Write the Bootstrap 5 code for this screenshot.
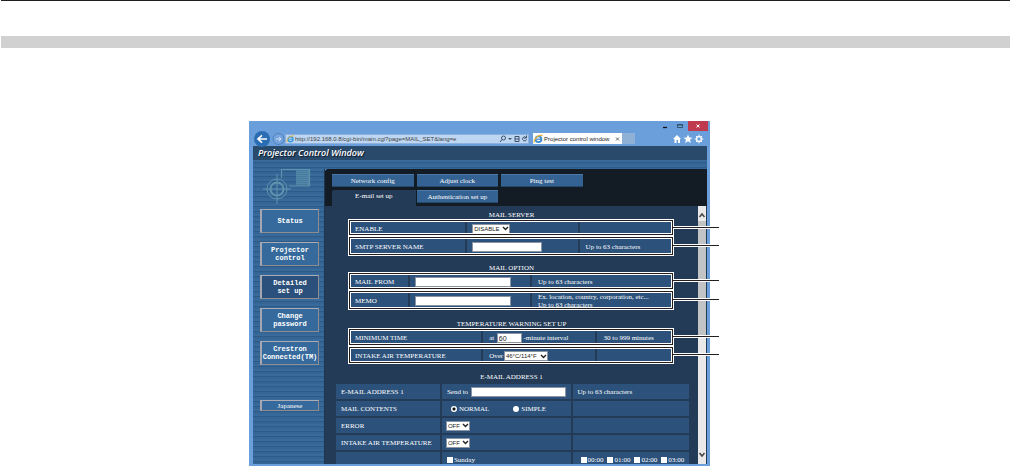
<!DOCTYPE html>
<html lang="en">
<head>
<meta charset="utf-8">
<meta name="viewport" content="width=device-width, initial-scale=1">
<title>Projector Control Window</title>
<link rel="stylesheet" href="https://cdn.jsdelivr.net/npm/bootstrap@5.3.0/dist/css/bootstrap.min.css">
<script src="https://cdn.jsdelivr.net/npm/bootstrap@5.3.0/dist/js/bootstrap.bundle.min.js"></script>
<style>
:root{--frame:#6b9fdb;--ink:#231f20;--panel:#233b57;--cell:#2c527c;--tab:#346292;--dark:#131b24}
body{background:#fff;font:7px/8px "Liberation Serif",serif;overflow-x:hidden}
.rule-top{height:1px;background:var(--ink);margin-left:1px}
.rule-band{height:12px;background:#d1d1d1;margin:35px 0 73px 1px}
.stage{display:grid;grid-template-columns:249fr 461fr 300fr}
.browser{grid-column:2;background:var(--frame);padding:0 3px 2px 4px}
input,select,button{font:inherit;border-radius:0}
/* window chrome */
.chrome{font:6px/8px "Liberation Sans",sans-serif;color:#222}
.titlebar{height:10px;margin-right:-1px}
.titlebar button{border:0;background:none;padding:0;height:10px;line-height:0}
.titlebar .shut{background:#bf3a4e;width:20px}
.toolbar-row{height:15px}
.toolbar-row button,.toolbar-row .ico{border:0;background:none;padding:0;line-height:0}
.addr{background:#bdd6f2;height:10px;border:1px solid #8fb1dc;flex:245 1 0;min-width:0}
.addr input{border:0;background:none;padding:0;color:#444;height:8px;min-width:0}
.page-tab{background:#fff;height:11px;flex:90 1 0;min-width:0;white-space:nowrap}
.new-tab{background:#8fb1d6;height:11px;width:13px}
.toolbar-row .tools{padding-left:38px}
/* page */
.banner{height:14px;background:#2a4a6b;color:#fff;font:italic 600 9px/14px "Open Sans",sans-serif;text-shadow:1px 1px 1px #0b1725;padding-left:5px}
.stripes{background:repeating-linear-gradient(#386a9b 0 2px,#2d5a86 2px 3px,#356594 3px 5px)}
.strip{height:9px}
.side{width:72px;padding:0 5px 0 7px;border-right:1px solid #20364f}
.side .btn{display:flex;align-items:center;justify-content:center;height:24px;border:1px solid #8d8d92;border-top-color:#a9abb5;border-left:2px solid #a5a8b3;border-radius:0;background:#366a9c;color:#fff;font:bold 7px/8px "Liberation Mono",monospace;padding:0;margin-bottom:9px;text-align:center;white-space:nowrap}
.side .btn.now{background:#2b507b}
.side .btn.lang{height:11px;margin-top:35px;font-family:"Liberation Serif",serif;font-weight:400}
.emblem{height:40px}
.main-col{min-width:0}
.top-tabs{background:var(--dark);padding:5px 0 0 7px;border-top-left-radius:3px;height:37px}
.tab-grid{display:grid;grid-template-columns:repeat(3,82fr) 122fr;column-gap:3px;row-gap:3px}
.tab-grid a{background:var(--tab);color:#fff;text-decoration:none;text-align:center;height:13px;border-top:1px solid #4a7aab;border-bottom:1px solid #24486e;line-height:12px;white-space:nowrap}
.tab-grid a.on{background:var(--panel);border:0;height:16px;line-height:13px;margin-right:-2px;border-radius:2px 0 0 0}
.form-row{background:var(--panel)}
.form-pane{color:#fff;height:258px;min-width:0}
.head{font-size:7px;line-height:8px;text-align:center;margin:0;font-weight:400}
.head.first{padding-top:5px}
.head.mid{padding-top:8px}
.head.far{padding:10px 0 0}
.head.last{padding:9px 0 3px}
.framed{position:relative;margin:0 24px 0 23px;border:1px solid #fff;background:var(--panel);display:grid;column-gap:2px}
.framed::before{content:"";position:absolute;inset:0;border:1px solid var(--ink);box-shadow:inset 0 0 0 1px #fff;pointer-events:none}
.framed::after{content:"";position:absolute;left:100%;top:50%;margin-top:-2px;width:46px;height:3px;background:var(--ink);border:solid #fff;border-width:1px 0}
.framed>div{background:var(--cell);display:flex;align-items:center;padding:2px 5px 0 6px;white-space:nowrap;min-width:0}
.framed label,.sched label{flex:none}
.h17{height:17px}.h18{height:18px}.h20{height:20px}
.g-server{grid-template-columns:117fr 111fr 94fr}
.g-option{grid-template-columns:59fr 121fr 142fr}
.g-temp{grid-template-columns:133fr 113fr 76fr}
.field{border:1px solid #8b94a3;background:#fff;height:10px;padding:0 1px;color:#222;font-family:"Liberation Sans",sans-serif;font-size:7px;line-height:8px;min-width:0;margin-left:-1px}
select.field{appearance:none;padding:0 8px 0 1px;font-size:6px;background:#fff url("data:image/svg+xml,%3Csvg xmlns='http://www.w3.org/2000/svg' viewBox='0 0 7 5'%3E%3Cpath d='M1 1l2.5 2.5L6 1' fill='none' stroke='%23222' stroke-width='1.4'/%3E%3C/svg%3E") no-repeat right 0 center/7px 5px}
.w-long{width:96px}.w-mid{width:70px}.w-num{width:25px}.w-mode{width:38px}.w-temp{width:44px}.w-off{width:24px}
.sched{table-layout:fixed;width:calc(100% - 20px);border-collapse:separate;border-spacing:0;margin:0 9px 0 11px}
.sched td,.sched th{background:var(--cell);padding:0 5px;height:17px;border-bottom:2px solid var(--panel);border-right:2px solid var(--panel);font-weight:400;vertical-align:middle;white-space:nowrap;line-height:8px}
.sched tr>:last-child{border-right:0}
.sched .inner{height:15px;display:flex;align-items:center}
.sched .cut .inner{height:12px;padding-top:4px}
.sched .cut td,.sched .cut th{height:12px;border-bottom:0}
.sched .hours{gap:4px;padding-left:3px}
input[type=radio],input[type=checkbox]{appearance:none;width:6px;height:6px;background:#fff;margin:0 1px 0 0;flex:none}
input[type=radio]{border-radius:50%;margin-right:2px}
input[type=radio]:checked{background:radial-gradient(circle,#111 0 1px,#fff 2px)}
.scroll{width:8px;background:#e9e9e9;margin-right:1px}
.scroll .arr{height:15px;line-height:0}
.scroll .thumb{height:114px;background:#c1c3c4}
</style>
</head>
<body>
<div class="rule-top"></div>
<div class="rule-band"></div>
<main class="stage">
 <section class="browser">
  <div class="chrome">
   <div class="titlebar d-flex justify-content-end">
    <button aria-label="Minimize" class="me-2"><svg width="6" height="10"><path d="M1 6.5h4" stroke="#111" stroke-width="1.3"/></svg></button>
    <button aria-label="Restore" class="me-1"><svg width="8" height="10"><path d="M1.500 3.500h5v3h-5zM1 4h6" fill="none" stroke="#33536f"/></svg></button>
    <button aria-label="Close" class="shut"><svg width="8" height="8" viewBox="0 0 8 8"><path d="M2.5 2.5l3 3m0-3l-3 3" stroke="#fff"/></svg></button>
   </div>
   <div class="toolbar-row d-flex align-items-center">
    <button aria-label="Back"><svg width="18" height="16" viewBox="0 0 18 16"><circle cx="9" cy="8" r="8" fill="#2b6db3"/><path d="M14 8H5m4-3.700L5 8l4 3.700" fill="none" stroke="#fff" stroke-width="1.700"/></svg></button>
    <button aria-label="Forward"><svg width="14" height="14" viewBox="0 0 14 14"><circle cx="7.500" cy="7" r="5.500" fill="#75a4dc" stroke="#4e80bd"/><path d="M5 7h5M8 5l2 2-2 2" fill="none" stroke="#d3e4f7"/></svg></button>
    <div class="addr d-flex align-items-center">
     <span class="ico"><svg width="9" height="8" viewBox="0 0 9 8"><circle cx="4.500" cy="4.200" r="2.500" fill="none" stroke="#3c9bdc" stroke-width="1.400"/><path d="M3 4.200h4" stroke="#3c9bdc"/><path d="M1 7C0 4 5 0 8 1" fill="none" stroke="#e9b637"/></svg></span>
     <input class="flex-grow-1" aria-label="Address" value="http://192.168.0.8/cgi-bin/main.cgi?page=MAIL_SET&amp;lang=e">
     <span class="ico"><svg width="29" height="8" viewBox="0 0 29 8" fill="none" stroke="#3f5068"><circle cx="4.500" cy="3" r="2"/><path d="M3 4.500L1 7"/><path d="M9 3h4l-2 2z" fill="#3f5068" stroke="none"/><path d="M16 1.500h4v5h-4zM16 4h4"/><path d="M27 2.500a2 2 0 1 0 .500 2M27.500.500v2.500H25"/></svg></span>
    </div>
    <div class="page-tab d-flex align-items-center ms-1">
     <svg class="flex-shrink-0" width="11" height="10" viewBox="0 0 9 8"><circle cx="4.500" cy="4.200" r="2.400" fill="none" stroke="#3c8bcc" stroke-width="1.400"/><path d="M3 4.200h4" stroke="#3c8bcc"/><path d="M1 7C0 4 5 0 8 1" fill="none" stroke="#e9b637"/></svg>
     <span class="flex-grow-1">Projector control window</span><svg class="flex-shrink-0" width="9" height="8"><path d="M3 2.500l3 3m0-3l-3 3" stroke="#666"/></svg>
    </div>
    <div class="new-tab"></div>
    <span class="ico ms-auto tools"><svg width="34" height="10" viewBox="0 0 34 10" fill="#fff"><path d="M4 1L0 5h1.500v4H3.500V6h1.500v3H7V5h1zM15 .500l1.300 3 3.200.200-2.500 2 .900 3.200L15 7.200l-2.900 1.700.900-3.200-2.500-2 3.200-.200z"/><circle cx="26" cy="5" r="2.400" fill="none" stroke="#fff" stroke-width="1.400"/><path d="M26 .700v8.600M21.700 5h8.600M23 2l6 6M29 2l-6 6" stroke="#fff" stroke-dasharray="1.600 5.400"/></svg></span>
   </div>
  </div>
  <div class="banner">Projector Control Window</div>
  <div class="strip stripes"></div>
  <div class="d-flex">
   <nav class="side stripes flex-shrink-0" aria-label="Main menu">
    <div class="emblem"><svg width="59" height="38" viewBox="0 0 59 38" fill="none" stroke="#5e93ae"><path d="M21.500 9V.500h28V17H29" stroke-width="1.200"/><path d="M36 1h13v16H36z" fill="#5486a8" stroke="none"/><path d="M37 1v16M39 1v16M41 1v16M43 1v16M45 1v16M47 1v16" stroke="#3d7199" stroke-dasharray="1 1"/><circle cx="17" cy="20" r="10"/><circle cx="17" cy="20" r="6.500" stroke-width="2"/><path d="M17 5v30M3 20h28"/></svg></div>
    <a href="#" class="btn">Status</a>
    <a href="#" class="btn">Projector<br>control</a>
    <a href="#" class="btn now">Detailed<br>set up</a>
    <a href="#" class="btn">Change<br>password</a>
    <a href="#" class="btn mb-0">Crestron<br>Connected(TM)</a>
    <a href="#" class="btn lang mb-0">Japanese</a>
   </nav>
   <div class="main-col flex-grow-1">
    <nav class="top-tabs" aria-label="Detailed set up">
     <div class="tab-grid">
      <a href="#">Network config</a><a href="#">Adjust clock</a><a href="#">Ping test</a><span></span>
      <a href="#" class="on">E-mail set up</a><a href="#">Authentication set up</a>
     </div>
    </nav>
    <div class="form-row d-flex">
     <form class="form-pane flex-grow-1">
      <h2 class="head first">MAIL SERVER</h2>
      <div class="framed h17 g-server"><div><label for="en">ENABLE</label></div><div><select id="en" class="field w-mode"><option>DISABLE</option></select></div><div></div></div>
      <div class="framed h20 g-server"><div><label for="smtp">SMTP SERVER NAME</label></div><div><input id="smtp" class="field w-mid"></div><div>Up to 63 characters</div></div>
      <h2 class="head mid">MAIL OPTION</h2>
      <div class="framed h18 g-option"><div><label for="from">MAIL FROM</label></div><div><input id="from" class="field w-long"></div><div>Up to 63 characters</div></div>
      <div class="framed h20 g-option"><div><label for="memo">MEMO</label></div><div><input id="memo" class="field w-long"></div><div>Ex. location, country, corporation, etc...<br>Up to 63 characters</div></div>
      <h2 class="head far">TEMPERATURE WARNING SET UP</h2>
      <div class="framed h18 g-temp"><div><label for="mt">MINIMUM TIME</label></div><div>at&nbsp;&nbsp;<input id="mt" class="field w-num" value="60">&nbsp;-minute interval</div><div>30 to 999 minutes</div></div>
      <div class="framed h18 g-temp"><div><label for="at">INTAKE AIR TEMPERATURE</label></div><div>Over&nbsp;<select id="at" class="field w-temp"><option>46°C/114°F</option></select></div><div></div></div>
      <h2 class="head last">E-MAIL ADDRESS 1</h2>
      <table class="sched">
       <colgroup><col style="width:30%"><col style="width:37%"><col style="width:33%"></colgroup>
       <tr><th><label for="em">E-MAIL ADDRESS 1</label></th><td><div class="inner">Send to&nbsp;&nbsp;<input id="em" class="field w-long"></div></td><td>Up to 63 characters</td></tr>
       <tr><th>MAIL CONTENTS</th><td><div class="inner ps-1"><input type="radio" name="c" id="n" checked><label for="n" class="me-4">NORMAL</label><input type="radio" name="c" id="s"><label for="s">SIMPLE</label></div></td><td></td></tr>
       <tr><th><label for="er">ERROR</label></th><td><div class="inner"><select id="er" class="field w-off"><option>OFF</option></select></div></td><td></td></tr>
       <tr><th><label for="ia">INTAKE AIR TEMPERATURE</label></th><td><div class="inner"><select id="ia" class="field w-off"><option>OFF</option></select></div></td><td></td></tr>
       <tr class="cut"><th></th><td><div class="inner"><input type="checkbox" id="su"><label for="su">Sunday</label></div></td><td><div class="inner hours"><label class="d-flex align-items-center"><input type="checkbox">00:00</label><label class="d-flex align-items-center"><input type="checkbox">01:00</label><label class="d-flex align-items-center"><input type="checkbox">02:00</label><label class="d-flex align-items-center"><input type="checkbox">03:00</label></div></td></tr>
      </table>
     </form>
     <div class="scroll d-flex flex-column flex-shrink-0" aria-hidden="true">
      <div class="arr"><svg width="8" height="15"><path d="M1.500 11L4 8l2.500 3" fill="none" stroke="#444" stroke-width="1.500"/></svg></div>
      <div class="thumb"></div>
      <div class="arr mt-auto"><svg width="8" height="15"><path d="M1.500 4L4 7l2.500-3" fill="none" stroke="#444" stroke-width="1.500"/></svg></div>
     </div>
    </div>
   </div>
  </div>
 </section>
</main>
</body>
</html>
